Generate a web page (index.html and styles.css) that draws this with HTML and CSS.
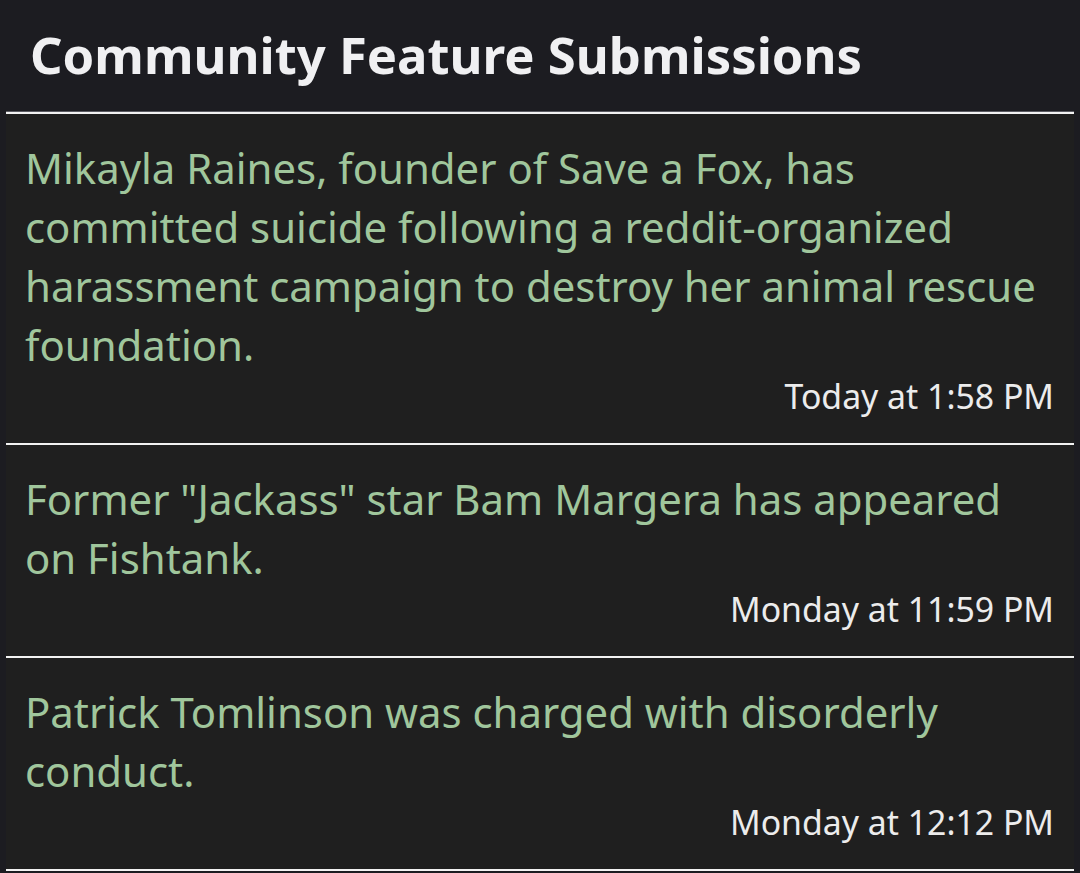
FILE: index.html
```html
<!DOCTYPE html>
<html lang="en">
<head>
<meta charset="utf-8">
<title>Community Feature Submissions</title>
<link rel="stylesheet" href="styles.css">
</head>
<body>
<header class="head">
  <h1 class="head-title">Community Feature Submissions</h1>
</header>
<ul class="list">
  <li class="item">
    <a class="item-title" href="#">Mikayla Raines, founder of Save a Fox, has committed suicide following a reddit-organized harassment campaign to destroy her animal rescue foundation.</a>
    <div class="item-time">Today at 1:58 PM</div>
  </li>
  <li class="item">
    <a class="item-title" href="#">Former "Jackass" star Bam Margera has appeared on Fishtank.</a>
    <div class="item-time">Monday at 11:59 PM</div>
  </li>
  <li class="item">
    <a class="item-title" href="#">Patrick Tomlinson was charged with disorderly conduct.</a>
    <div class="item-time">Monday at 12:12 PM</div>
  </li>
</ul>
</body>
</html>
```
FILE: styles.css
```css
html, body {
  margin: 0;
  padding: 0;
  background: #1c1c21;
  font-family: "Noto Sans", "Open Sans", sans-serif;
}
.head {
  height: 111px;
  display: flex;
  align-items: center;
  padding-left: 30px;
  box-sizing: border-box;
}
.head-title {
  margin: 0;
  color: #f0f0f2;
  font-size: 50.8px;
  font-weight: 700;
  line-height: 1;
}
.list {
  list-style: none;
  margin: 0 6px;
  padding: 0;
  background: #1f1f1f;
  border-top: 1px solid #5b5b62;
}
.item {
  padding: 24px 20px 24px 19px;
  display: flex;
  flex-direction: column;
  border-bottom: 2px solid #f2f2f2;
}
.item:first-child {
  border-top: 2px solid #f2f2f2;
}
.item-title {
  color: #a0c69c;
  text-decoration: none;
  font-size: 41.9px;
  line-height: 59px;
}
.item-time {
  color: #ececec;
  font-size: 33.8px;
  line-height: 45px;
  text-align: right;
}
```
